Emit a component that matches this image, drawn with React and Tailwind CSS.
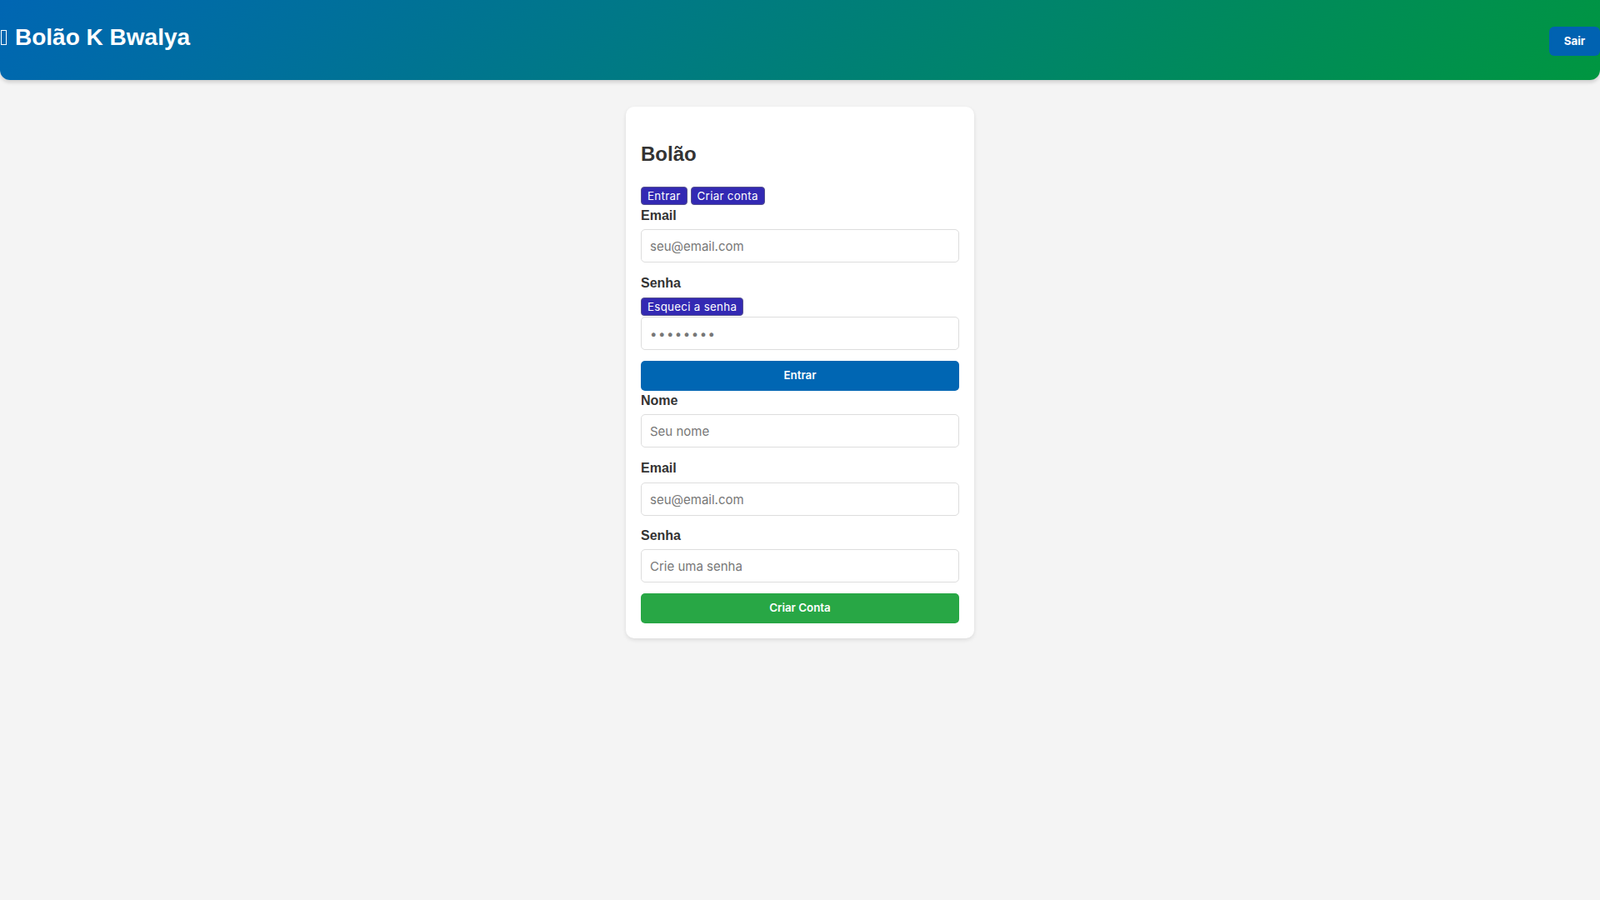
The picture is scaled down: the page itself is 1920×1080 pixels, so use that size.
export default function App() {
  const sans = { fontFamily: '"Liberation Sans", Arial, sans-serif' };
  const inter = { fontFamily: 'Inter, "Noto Sans", sans-serif' };
  const tab =
    "h-[22px] px-[7px] rounded-[4px] border border-[#57528f] bg-[#3329b3] text-white text-[13.33px] leading-[20px] tracking-[0.3px]";
  const input =
    "block w-full h-[40px] rounded-[5px] border border-[#dddddd] bg-white px-[10px] text-[15px] text-[#333] placeholder:text-[#777] outline-none";
  const label = "block h-[18px] text-[16px] leading-[18px] font-bold text-[#333]";
  return (
    <div className="min-h-screen w-full bg-[#f4f4f4]" style={sans}>
      <header className="flex h-[96px] justify-between rounded-b-[12px] bg-[linear-gradient(135deg,#0066b3,#009640)] shadow-[0_3px_4px_rgba(0,0,0,0.15)]">
        <div className="mt-[29px] flex h-[32px] items-center text-[28px] font-bold leading-[32px] text-white">
          <span className="ml-[1px] mr-[10px] inline-block h-[18px] w-[7px] border-[1.5px] border-white" />
          <span>Bolão K Bwalya</span>
        </div>
        <button
          className="mt-[32px] h-[35px] w-[61px] rounded-[6px] bg-[#0062b1] text-[13.33px] font-bold text-white"
          style={inter}
        >
          Sair
        </button>
      </header>

      <div className="mx-auto mt-[32px] w-[418px] rounded-[10px] bg-white px-[18px] pb-[18px] pt-[18px] shadow-[0_2px_5px_rgba(0,0,0,0.1)]">
        <h2 className="mt-[25px] h-[28px] text-[24px] font-bold leading-[28px] text-[#333]">Bolão</h2>

        <div className="mt-[25px] flex gap-[4px]" style={inter}>
          <button className={tab}>Entrar</button>
          <button className={tab}>Criar conta</button>
        </div>

        <label className={label + " mt-[4px]"}>Email</label>
        <input className={input + " mt-[7px]"} style={inter} placeholder="seu@email.com" />

        <label className={label + " mt-[16px]"}>Senha</label>
        <div className="mt-[8px] flex" style={inter}>
          <button className={tab}>Esqueci a senha</button>
        </div>
        <input
          className={input + " mt-[1px] tracking-[1.5px] !text-[#777]"}
          style={inter}
          type="password"
          defaultValue="12345678"
        />

        <button
          className="mt-[13px] block h-[36px] w-full rounded-[5px] bg-[#0066b3] text-[13.33px] font-semibold text-white"
          style={inter}
        >
          Entrar
        </button>

        <label className={label + " mt-[3px]"}>Nome</label>
        <input className={input + " mt-[7px]"} style={inter} placeholder="Seu nome" />

        <label className={label + " mt-[16px]"}>Email</label>
        <input className={input + " mt-[8px]"} style={inter} placeholder="seu@email.com" />

        <label className={label + " mt-[15px]"}>Senha</label>
        <input className={input + " mt-[7px]"} style={inter} placeholder="Crie uma senha" />

        <button
          className="mt-[13px] block h-[36px] w-full rounded-[5px] bg-[#28a745] text-[13.33px] font-semibold text-white"
          style={inter}
        >
          Criar Conta
        </button>
      </div>
    </div>
  );
}
